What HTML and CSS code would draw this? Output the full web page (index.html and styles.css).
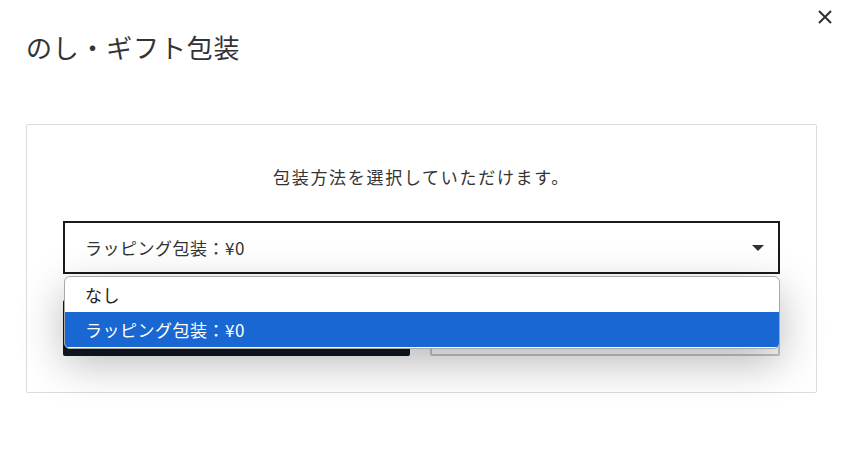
FILE: index.html
```html
<!DOCTYPE html>
<html lang="ja">
<head>
<meta charset="utf-8">
<title>のし・ギフト包装</title>
<link rel="stylesheet" href="styles.css">
</head>
<body>
<div class="modal">
  <header class="modal-head">
    <h1 class="modal-title">のし・ギフト包装</h1>
    <button class="close" aria-label="閉じる">
      <svg width="16" height="16" viewBox="0 0 16 16"><path d="M2 2L14 14M14 2L2 14" stroke="#2b3036" stroke-width="2" fill="none"/></svg>
    </button>
  </header>
  <section class="card">
    <p class="lead">包装方法を選択していただけます。</p>
    <div class="select-wrap">
      <div class="select">
        <span>ラッピング包装：¥0</span>
        <span class="caret"></span>
      </div>
      <ul class="options">
        <li class="opt">なし</li>
        <li class="opt sel">ラッピング包装：¥0</li>
      </ul>
    </div>
    <div class="actions">
      <button class="btn primary" aria-label="決定する"></button>
      <button class="btn secondary" aria-label="キャンセル"></button>
    </div>
  </section>
</div>
</body>
</html>
```
FILE: styles.css
```css
* { box-sizing: border-box; }
html, body { margin: 0; padding: 0; background: #fff; }
body {
  font-family: "Noto Sans CJK JP", "Noto Sans", sans-serif;
  color: #333;
  width: 844px;
  height: 472px;
  overflow: hidden;
}
.modal { padding: 0 27px 0 26px; }
.modal-head {
  position: relative;
  height: 124px;
}
.modal-title {
  margin: 0;
  padding-top: 29px;
  font-size: 26px;
  font-weight: 400;
  line-height: 36px;
  letter-spacing: 0.03em;
  color: #333;
}
.close {
  position: absolute;
  top: 8px;
  right: -17px;
  width: 18px;
  height: 18px;
  padding: 1px;
  border: 0;
  background: none;
}
.close svg { display: block; }
.card {
  border: 1px solid #dcdcdc;
  border-radius: 2px;
  padding: 36px;
}
.lead {
  margin: 0 0 28px;
  text-align: center;
  font-size: 17px;
  line-height: 32px;
  letter-spacing: 0.1em;
}
.select-wrap { position: relative; }
.select {
  height: 53px;
  border: 2px solid #151b21;
  display: flex;
  align-items: center;
  justify-content: space-between;
  padding: 0 14px 0 20px;
  font-size: 17px;
  letter-spacing: 0.03em;
  background: #fff;
}
.caret {
  width: 0; height: 0;
  border-left: 6px solid transparent;
  border-right: 6px solid transparent;
  border-top: 6px solid #333;
}
.options {
  position: absolute;
  top: 55px;
  left: 1px;
  right: 0;
  margin: 0;
  padding: 0 0 1px;
  list-style: none;
  background: #fff;
  border: 1px solid #a8a8a8;
  border-radius: 6px;
  overflow: hidden;
  box-shadow: 0 14px 44px rgba(0, 0, 0, 0.28);
  z-index: 2;
  font-size: 17px;
  letter-spacing: 0.03em;
}
.opt {
  height: 35px;
  line-height: 35px;
  padding-left: 20px;
  color: #222;
}
.opt.sel { background: #1967d2; color: #fff; }
.actions {
  display: flex;
  gap: 20px;
  margin-top: 26px;
}
.btn {
  flex: 1;
  height: 56px;
  border-radius: 2px;
  font-family: inherit;
  font-size: 16px;
}
.primary { background: #111820; color: #fff; border: 0; }
.secondary { background: #fff; color: #333; border: 2px solid #c8c8c8; }
```
